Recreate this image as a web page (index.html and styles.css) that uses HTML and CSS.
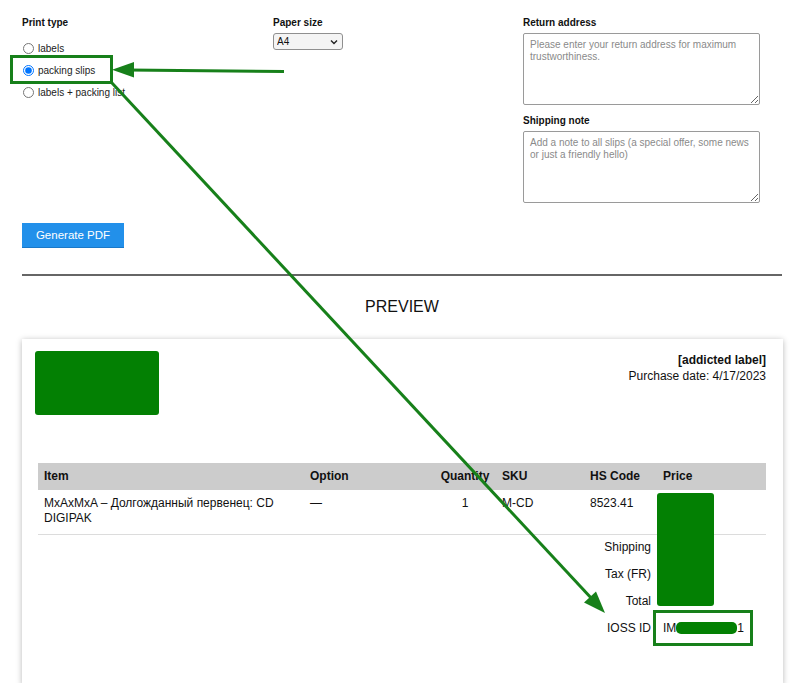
FILE: index.html
```html
<!DOCTYPE html>
<html>
<head>
<meta charset="utf-8">
<link rel="stylesheet" href="styles.css">
</head>
<body>
<div class="page">
  <div class="form-row">
    <div class="col col-type">
      <div class="label">Print type</div>
      <div class="radios">
        <label class="radio"><input type="radio" name="pt"><span>labels</span></label>
        <label class="radio"><input type="radio" name="pt" checked><span>packing slips</span></label>
        <label class="radio"><input type="radio" name="pt"><span>labels + packing list</span></label>
      </div>
    </div>
    <div class="col col-paper">
      <div class="label">Paper size</div>
      <span class="select-wrap">
        <select class="select"><option>A4</option></select>
        <svg class="chev" width="8" height="6" viewBox="0 0 8 6"><path d="M1 1.5 L4 4.5 L7 1.5" fill="none" stroke="#222" stroke-width="1.4"/></svg>
      </span>
    </div>
    <div class="col col-text">
      <div class="label">Return address</div>
      <textarea class="area" placeholder="Please enter your return address for maximum trustworthiness."></textarea>
      <div class="label label-second">Shipping note</div>
      <textarea class="area" placeholder="Add a note to all slips (a special offer, some news or just a friendly hello)"></textarea>
    </div>
  </div>
  <button class="btn">Generate PDF</button>
  <div class="rule"></div>
  <div class="preview-title">PREVIEW</div>
  <div class="card">
    <div class="card-head">
      <div class="logo"></div>
      <div class="shop">
        <div class="shop-name">[addicted label]</div>
        <div>Purchase date: 4/17/2023</div>
      </div>
    </div>
    <div class="table-wrap">
      <table class="items">
        <colgroup>
          <col class="c-item"><col class="c-opt"><col class="c-qty"><col class="c-sku"><col class="c-hs"><col class="c-price">
        </colgroup>
        <thead>
          <tr><th>Item</th><th>Option</th><th class="qty">Quantity</th><th>SKU</th><th>HS Code</th><th>Price</th></tr>
        </thead>
        <tbody>
          <tr class="line"><td>MxAxMxA – Долгожданный первенец: CD DIGIPAK</td><td>—</td><td class="qty">1</td><td>M-CD</td><td>8523.41</td><td></td></tr>
          <tr class="sum"><td colspan="5">Shipping</td><td></td></tr>
          <tr class="sum"><td colspan="5">Tax (FR)</td><td></td></tr>
          <tr class="sum"><td colspan="5">Total</td><td></td></tr>
          <tr class="sum"><td colspan="5">IOSS ID</td><td class="ioss">IM<span class="pill"></span>1</td></tr>
        </tbody>
      </table>
      <div class="redact-price"></div>
    </div>
  </div>
</div>
<svg class="annot" width="807" height="683" viewBox="0 0 807 683">
  <rect x="11.5" y="56.5" width="100" height="26" fill="none" stroke="#17801a" stroke-width="3"/>
  <line x1="284" y1="71.5" x2="128" y2="70" stroke="#17801a" stroke-width="3"/>
  <polygon points="112,69.8 134,62 134,77.5" fill="#17801a"/>
  <line x1="112" y1="83" x2="593" y2="600" stroke="#17801a" stroke-width="3"/>
  <polygon points="605,613 584,602.5 596,591.5" fill="#17801a"/>
  <rect x="654.5" y="611.5" width="97" height="33" fill="none" stroke="#17801a" stroke-width="3"/>
</svg>
</body>
</html>
```
FILE: styles.css
```css
html, body {
  margin: 0;
  padding: 0;
  height: 683px;
  overflow: hidden;
  background: #fff;
}
body {
  font-family: "Liberation Sans", Arial, sans-serif;
  color: #111;
  position: relative;
}
.page {
  padding: 17px 0 0 22px;
  width: 761px;
}
.form-row {
  display: flex;
}
.col-type { width: 251px; }
.col-paper { width: 250px; }
.col-text { width: 237px; }
.label {
  font-size: 10px;
  font-weight: bold;
  line-height: 12px;
}
.radios {
  margin-top: 8px;
  display: flex;
  flex-direction: column;
}
.radio {
  display: flex;
  align-items: center;
  height: 22px;
  font-size: 10px;
  color: #222;
}
.radio input {
  width: 11px;
  height: 11px;
  margin: 0 4px 0 1px;
}
.select-wrap {
  position: relative;
  display: inline-block;
  margin-top: 4px;
}
.select {
  appearance: none;
  -webkit-appearance: none;
  width: 70px;
  height: 17px;
  border: 1px solid #8f8f8f;
  border-radius: 3px;
  background: #f4f4f4;
  font-family: "Liberation Sans", Arial, sans-serif;
  font-size: 10px;
  padding: 0 0 0 3px;
  color: #111;
  display: block;
}
.chev {
  position: absolute;
  right: 5px;
  top: 6px;
}
.area {
  display: block;
  box-sizing: border-box;
  width: 237px;
  height: 72px;
  margin-top: 4px;
  border: 1px solid #9a9a9a;
  border-radius: 2px;
  padding: 5px 6px;
  font-family: "Liberation Sans", Arial, sans-serif;
  font-size: 10px;
  line-height: 12px;
  resize: both;
}
.area::placeholder {
  color: #8a8a8a;
}
.label-second {
  margin-top: 10px;
}
.btn {
  display: block;
  margin-top: 20px;
  width: 102px;
  height: 25px;
  background: #2290ea;
  color: #fff;
  border: none;
  border-bottom: 1px solid #1a78c8;
  font-family: "Liberation Sans", Arial, sans-serif;
  font-size: 11.5px;
  padding: 0;
}
.rule {
  margin-top: 26px;
  height: 2px;
  background: #666;
  width: 760px;
}
.preview-title {
  margin-top: 22px;
  text-align: center;
  font-size: 16px;
  line-height: 18px;
  width: 760px;
}
.card {
  margin-top: 23px;
  box-sizing: border-box;
  width: 761px;
  height: 346px;
  padding: 12px 17px 0 13px;
  background: #fff;
  box-shadow: 0 1px 6px rgba(0,0,0,0.28);
}
.card-head {
  display: flex;
  justify-content: space-between;
  align-items: flex-start;
}
.logo {
  width: 124px;
  height: 64px;
  background: #038003;
  border-radius: 3px;
}
.shop {
  text-align: right;
  font-size: 12px;
  line-height: 16px;
  padding-top: 1px;
}
.shop-name {
  font-weight: bold;
}
.table-wrap {
  position: relative;
  margin: 48px 0 0 3px;
}
.items {
  table-layout: fixed;
  width: 728px;
  border-collapse: collapse;
  font-size: 12px;
  line-height: 15px;
}
.c-item { width: 266px; }
.c-opt { width: 130px; }
.c-qty { width: 62px; }
.c-sku { width: 88px; }
.c-hs { width: 73px; }
.c-price { width: 109px; }
.items th {
  background: #cccccc;
  text-align: left;
  font-weight: bold;
  padding: 6px 6px;
  white-space: nowrap;
}
.items td {
  padding: 6px 6px 8px;
  vertical-align: top;
}
.items .qty {
  text-align: center;
}
.items tr.line td {
  border-bottom: 1px solid #dcdcdc;
}
.items tr.sum td {
  padding: 5px 6px 7px;
  height: 15px;
  text-align: right;
}
.items tr.sum td.ioss {
  text-align: left;
}
.pill {
  display: inline-block;
  width: 61px;
  height: 12px;
  background: #038003;
  border-radius: 5px;
  vertical-align: -2px;
}
.redact-price {
  position: absolute;
  left: 619px;
  top: 30px;
  width: 57px;
  height: 113px;
  background: #038003;
  border-radius: 3px;
}
.annot {
  position: absolute;
  left: 0;
  top: 0;
  pointer-events: none;
}
```
